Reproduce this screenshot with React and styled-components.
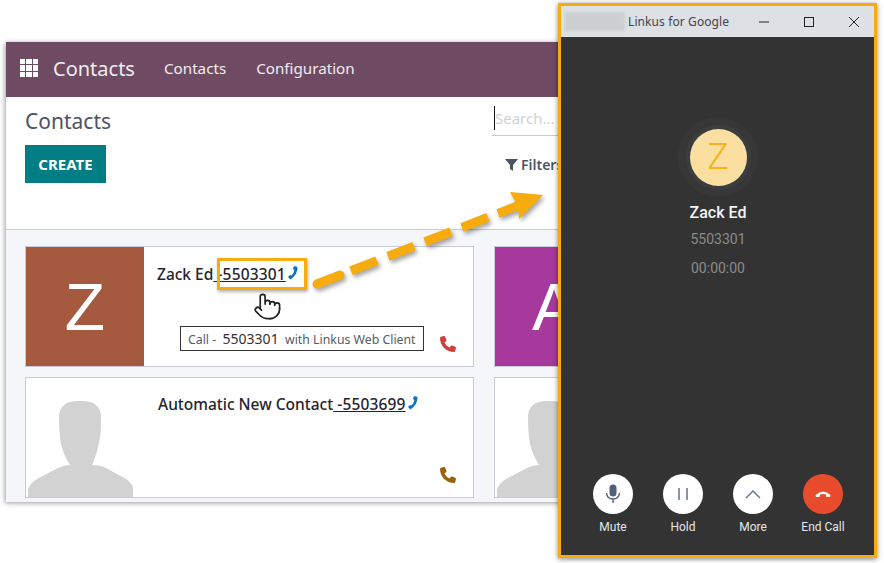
import React from 'react';
import styled, { createGlobalStyle } from 'styled-components';
import { FaPhone } from 'react-icons/fa6';
import { Pointer } from 'lucide-react';

const Global = createGlobalStyle`
  html, body { margin: 0; padding: 0; background: #fff; }
  * { box-sizing: border-box; }
`;

const Stage = styled.div`
  position: relative;
  width: 884px;
  height: 563px;
  overflow: hidden;
  padding: 42px 0 0 6px;
  background: #fff;
  font-family: "Noto Sans", "Open Sans", sans-serif;
`;

const OdooWindow = styled.div`
  width: 565px;
  height: 460px;
  display: flex;
  flex-direction: column;
  overflow: hidden;
  box-shadow: -1px 1px 5px rgba(0,0,0,.4);
`;

const NavBar = styled.div`
  height: 55px;
  flex: none;
  display: flex;
  align-items: center;
  padding: 0 0 3px 14px;
  background: #6f4b63;
  color: #f1ecef;
`;

const AppsGrid = styled.div`
  width: 18px;
  height: 18px;
  display: grid;
  grid-template-columns: repeat(3, 1fr);
  gap: 1px;
  margin: 0 15px 0 0;
  span { background: #fff; }
`;

const Brand = styled.div`
  font-size: 20px;
  margin-right: 29px;
`;

const NavLink = styled.div`
  font-size: 15.2px;
  margin-right: 30px;
`;

const ControlPanel = styled.div`
  height: 133px;
  flex: none;
  display: grid;
  grid-template-columns: 468px 1fr;
  padding: 9px 0 0 19px;
  background: #fff;
  border-bottom: 1px solid #ccc;
`;

const Title = styled.div`
  font-size: 21px;
  line-height: 30px;
  color: #4c5463;
`;

const CreateButton = styled.button`
  display: block;
  width: 81px;
  height: 38px;
  margin-top: 9px;
  padding: 0;
  border: 0;
  background: #017e84;
  color: #fff;
  font: 700 15px "Noto Sans", sans-serif;
`;

const SearchBox = styled.div`
  height: 30px;
  margin: 0 0 0 -1px;
  padding-left: 1px;
  border-bottom: 1px solid #ccc;
  font-size: 15px;
  line-height: 25px;
  color: #cfd2d6;
  position: relative;
  &::before {
    content: "";
    position: absolute;
    left: 2px;
    top: 0;
    width: 1px;
    height: 24px;
    background: #111;
  }
  span { margin-left: 2px; }
`;

const FilterRow = styled.div`
  display: flex;
  align-items: center;
  gap: 3px;
  margin: 19px 0 0 12px;
  font-size: 14px;
  font-weight: 600;
  color: #4c5463;
`;

const Kanban = styled.div`
  flex: 1;
  display: grid;
  grid-template-columns: 449px 449px;
  grid-template-rows: 121px 121px;
  column-gap: 20px;
  row-gap: 10px;
  padding: 16px 0 0 19px;
  background: #f5f6fa;
`;

const Card = styled.div`
  display: flex;
  background: #fff;
  border: 1px solid #c9ccd8;
  overflow: hidden;
`;

const Avatar = styled.div`
  width: 118px;
  flex: none;
  display: flex;
  align-items: center;
  justify-content: center;
  background: ${p => p.$bg || '#fff'};
  color: #fff;
  font: 400 66px "Liberation Sans", sans-serif;
`;

const Silhouette = styled.svg`
  width: 118px;
  height: 119px;
  display: block;
`;

const CardBody = styled.div`
  flex: 1;
  position: relative;
  padding: ${p => p.$top}px 0 0 ${p => p.$left}px;
  display: flex;
  align-items: flex-start;
  font-size: 15.5px;
  font-weight: 500;
  line-height: 20px;
  color: #1f2530;
`;

const PhoneLink = styled.span`
  text-decoration: underline;
  white-space: pre;
  letter-spacing: .15px;
`;

const Handset = styled.svg`
  width: 10px;
  height: 14px;
  margin: 2px 0 0 2px;
`;

const CallIcon = styled(FaPhone)`
  position: absolute;
  right: 17px;
  bottom: 14px;
  width: 16px;
  height: 16px;
  color: ${p => p.$color};
`;

const Highlight = styled.div`
  position: absolute;
  left: 217px;
  top: 258px;
  width: 90px;
  height: 32px;
  border: 3px solid #f6ab0e;
  box-shadow: 1px 2px 3px rgba(0,0,0,.3);
`;

const ArrowLayer = styled.svg`
  position: absolute;
  left: 0;
  top: 0;
  width: 884px;
  height: 563px;
  filter: drop-shadow(2px 3px 2px rgba(0,0,0,.35));
`;

const HandCursor = styled(Pointer)`
  position: absolute;
  left: 253px;
  top: 290px;
  width: 29px;
  height: 33px;
  color: #222;
  fill: #fff;
  stroke-width: 1.4;
`;

const Tooltip = styled.div`
  position: absolute;
  left: 180px;
  top: 326px;
  width: 244px;
  height: 25px;
  padding-left: 7px;
  border: 1px solid #333;
  background: #fff;
  font-size: 12.3px;
  line-height: 23px;
  color: #555c68;
  white-space: pre;
  b { font-weight: 400; color: #333; font-size: 14px; }
`;

const LinkusWindow = styled.div`
  position: absolute;
  left: 558px;
  top: 3px;
  width: 319px;
  height: 555px;
  display: flex;
  flex-direction: column;
  border: 3px solid #f6ab0e;
  background: #333;
  box-shadow: 0 1px 5px rgba(0,0,0,.5);
  font-family: Roboto, sans-serif;
`;

const TitleBar = styled.div`
  height: 31px;
  flex: none;
  display: flex;
  align-items: center;
  padding: 0 14px 0 4px;
  background: #dde0e5;
  color: #444;
  font: 12px "Noto Sans", sans-serif;
  letter-spacing: .1px;
`;

const BlurTag = styled.div`
  width: 60px;
  height: 19px;
  margin-right: 3px;
  background: #ccd0d0;
  filter: blur(1px);
`;

const WinControls = styled.div`
  margin-left: auto;
  display: flex;
  gap: 33px;
  svg { display: block; width: 12px; height: 12px; }
`;

const CallBody = styled.div`
  flex: 1;
  display: flex;
  flex-direction: column;
  align-items: center;
  padding: 80px 0 0 1px;
`;

const Halo = styled.div`
  width: 80px;
  height: 80px;
  display: flex;
  align-items: center;
  justify-content: center;
  border-radius: 50%;
  background: #373738;
`;

const CallerAvatar = styled.div`
  width: 57px;
  height: 57px;
  display: flex;
  align-items: center;
  justify-content: center;
  border-radius: 50%;
  background: #fbdfa1;
  box-shadow: 0 0 0 4px #3c3d3e;
  color: #f7b11c;
  font-size: 36px;
  font-weight: 300;
`;

const CallerName = styled.div`
  margin-top: 6px;
  font-size: 16px;
  font-weight: 500;
  line-height: 20px;
  color: #f4f4f4;
`;

const CallerLine = styled.div`
  margin-top: ${p => p.$gap}px;
  font-size: 14px;
  line-height: 18px;
  color: #8b8b8b;
`;

const Actions = styled.div`
  margin-top: auto;
  margin-bottom: 20px;
  display: flex;
  gap: 30px;
`;

const Action = styled.div`
  width: 40px;
  display: flex;
  flex-direction: column;
  align-items: center;
  gap: 5px;
  color: #e3e6ea;
  font-size: 12px;
  line-height: 16px;
  white-space: nowrap;
`;

const RoundButton = styled.div`
  width: 40px;
  height: 40px;
  display: flex;
  align-items: center;
  justify-content: center;
  border-radius: 50%;
  background: ${p => p.$bg || '#fff'};
`;

const cells = Array.from({ length: 9 });

const Person = () => (
  <Silhouette viewBox="0 0 118 119">
    <path
      fill="#d2d2d2"
      d="M2 119 V112 Q3 106 11 101 L32 90 Q38 87 44 87 Q38 78 35 66 Q33 55 33 38 Q34 24 50 23 H58 Q74 24 75 38 Q75 55 74 60 Q71 76 66 87 Q74 87 80 90 L100 101 Q106 105 107 110 V119 Z"
    />
  </Silhouette>
);

const BlueHandset = () => (
  <Handset viewBox="0 0 10 14">
    <path fill="#0a72c4" d="M6 0 L9.5 1 Q10 8 2.5 13.5 L0 11 L2 9 L3.6 9.6 Q6 7 6.4 4 L5 3 Z" />
  </Handset>
);

const Dashes = [
  'M317 284 L340 275',
  'M351 270.7 L377 260.6',
  'M388 256.3 L414 246.2',
  'M425 241.8 L451 231.7',
  'M462 227.4 L488 217.3',
];

export default function App() {
  return (
    <Stage>
      <Global />
      <OdooWindow>
        <NavBar>
          <AppsGrid>
            {cells.map((_, i) => <span key={i} />)}
          </AppsGrid>
          <Brand>Contacts</Brand>
          <NavLink>Contacts</NavLink>
          <NavLink>Configuration</NavLink>
        </NavBar>
        <ControlPanel>
          <div>
            <Title>Contacts</Title>
            <CreateButton>CREATE</CreateButton>
          </div>
          <div>
            <SearchBox><span>Search...</span></SearchBox>
            <FilterRow>
              <svg width="13" height="13" viewBox="0 0 13 13">
                <path fill="#4c5463" d="M0 1 H13 L8 7 V13 L5 11 V7 Z" />
              </svg>
              Filters
            </FilterRow>
          </div>
        </ControlPanel>
        <Kanban>
          <Card>
            <Avatar $bg="#a55a3f">Z</Avatar>
            <CardBody $top={17} $left={13}>
              Zack Ed<PhoneLink> -5503301</PhoneLink><BlueHandset />
              <CallIcon $color="#d0403c" />
            </CardBody>
          </Card>
          <Card>
            <Avatar $bg="#a8399c">A</Avatar>
          </Card>
          <Card>
            <Avatar><Person /></Avatar>
            <CardBody $top={16} $left={14}>
              Automatic New Contact<PhoneLink> -5503699</PhoneLink><BlueHandset />
              <CallIcon $color="#98640a" />
            </CardBody>
          </Card>
          <Card>
            <Avatar><Person /></Avatar>
          </Card>
        </Kanban>
      </OdooWindow>

      <Highlight />
      <ArrowLayer viewBox="0 0 884 563">
        {Dashes.map((d, i) => (
          <path key={d} d={d} stroke="#f6ab0e" strokeWidth="9" strokeLinecap={i === 0 ? 'round' : 'butt'} fill="none" />
        ))}
        <path fill="#f6ab0e" d="M496.4 209.2 L515.4 201.8 L510 192 L543 195 L519 219 L518.6 210.2 L499.6 217.6 Z" />
      </ArrowLayer>
      <HandCursor />
      <Tooltip>Call -  <b>5503301</b>  with Linkus Web Client</Tooltip>

      <LinkusWindow>
        <TitleBar>
          <BlurTag />
          Linkus for Google
          <WinControls>
            <svg viewBox="0 0 12 12"><path d="M1 6 H11" stroke="#222" /></svg>
            <svg viewBox="0 0 12 12"><rect x="1.5" y="1.5" width="9" height="9" fill="none" stroke="#222" /></svg>
            <svg viewBox="0 0 12 12"><path d="M1 1 L11 11 M11 1 L1 11" stroke="#222" /></svg>
          </WinControls>
        </TitleBar>
        <CallBody>
          <Halo><CallerAvatar>Z</CallerAvatar></Halo>
          <CallerName>Zack Ed</CallerName>
          <CallerLine $gap={7}>5503301</CallerLine>
          <CallerLine $gap={11}>00:00:00</CallerLine>
          <Actions>
            <Action>
              <RoundButton>
                <svg width="16" height="20" viewBox="0 0 16 20">
                  <rect x="4.5" y="0.5" width="7" height="12" rx="3.5" fill="#50607c" />
                  <path d="M1.5 9 Q2 15 8 15 Q14 15 14.5 9 M8 15 V19" stroke="#50607c" strokeWidth="1.4" fill="none" />
                </svg>
              </RoundButton>
              Mute
            </Action>
            <Action>
              <RoundButton>
                <svg width="14" height="14" viewBox="0 0 14 14">
                  <path d="M3 1 V13 M11 1 V13" stroke="#6b7a92" strokeWidth="1.6" />
                </svg>
              </RoundButton>
              Hold
            </Action>
            <Action>
              <RoundButton>
                <svg width="18" height="12" viewBox="0 0 18 12">
                  <path d="M2 10 L9 3 L16 10" stroke="#6b7a92" strokeWidth="1.5" fill="none" />
                </svg>
              </RoundButton>
              More
            </Action>
            <Action>
              <RoundButton $bg="#e84c2c">
                <svg width="16" height="8" viewBox="0 0 16 8">
                  <path fill="#fff" d="M0.5 5 Q8 -2 15.5 5 L15 7 L11.5 7 L11 4.5 Q8 3.5 5 4.5 L4.5 7 L1 7 Z" />
                </svg>
              </RoundButton>
              End Call
            </Action>
          </Actions>
        </CallBody>
      </LinkusWindow>
    </Stage>
  );
}
